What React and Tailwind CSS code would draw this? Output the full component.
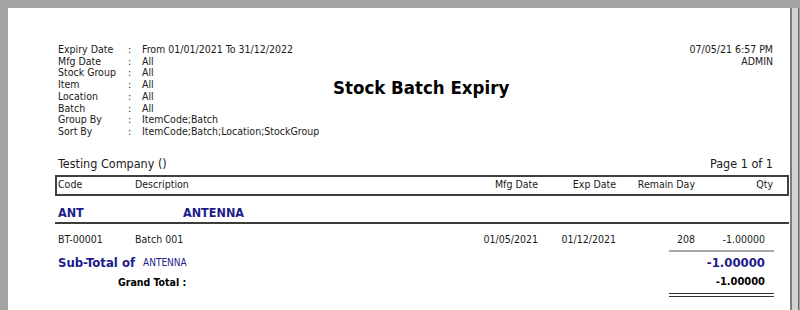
import React from 'react';

const filters = [
  ['Expiry Date', 'From 01/01/2021 To 31/12/2022'],
  ['Mfg Date', 'All'],
  ['Stock Group', 'All'],
  ['Item', 'All'],
  ['Location', 'All'],
  ['Batch', 'All'],
  ['Group By', 'ItemCode;Batch'],
  ['Sort By', 'ItemCode;Batch;Location;StockGroup'],
];

const cols = 'grid grid-cols-[77px_325px_78px_78px_79px_78px]';

export default function App() {
  return (
    <div className="w-[800px] h-[310px] overflow-hidden bg-[#a3a3a3] pt-[8px] pl-[8px] font-['DejaVu_Sans_Condensed','DejaVu_Sans',sans-serif] text-[#1a1a1a]">
      <div className="flex h-full">
        <div className="w-[782px] h-full bg-white pt-[36px] pl-[47px] pr-[1px]">
          {/* report header */}
          <div className="flex pl-[3px] pr-[16px] text-[10.5px] leading-[11.7px]">
            <div className="w-[275px]">
              {filters.map(([label, value]) => (
                <div key={label} className="grid grid-cols-[70px_14px_auto]">
                  <span>{label}</span>
                  <span>:</span>
                  <span>{value}</span>
                </div>
              ))}
            </div>
            <div className="pt-[33px] text-[18.5px] leading-[22px] font-bold text-black">
              Stock Batch Expiry
            </div>
            <div className="ml-auto text-right">
              <div>07/05/21 6:57 PM</div>
              <div>ADMIN</div>
            </div>
          </div>

          <div className="mt-[18px] flex justify-between pl-[3px] pr-[16px] text-[12.5px] leading-[15px]">
            <span>Testing Company ()</span>
            <span>Page 1 of 1</span>
          </div>

          {/* column header */}
          <div className="mt-[4px] h-[21px] border-2 border-[#404040] pl-[1px] pr-[14px] text-[10.5px] flex items-center">
            <div className={cols + ' w-full'}>
              <span>Code</span>
              <span>Description</span>
              <span className="text-right">Mfg Date</span>
              <span className="text-right">Exp Date</span>
              <span className="text-right">Remain Day</span>
              <span className="text-right">Qty</span>
            </div>
          </div>

          {/* group: item */}
          <div className="h-[28px] flex items-end pb-[2px] pl-[3px] border-b-2 border-[#3c3c3c] text-[12.5px] leading-[14px] font-bold text-[#1c1c8c]">
            <span className="w-[125px]">ANT</span>
            <span>ANTENNA</span>
          </div>

          <div className="pl-[3px] pr-[16px] text-[10.5px]">
            <div className={cols + ' mt-[8px] leading-[14px]'}>
              <span>BT-00001</span>
              <span>Batch 001</span>
              <span className="text-right">01/05/2021</span>
              <span className="text-right">01/12/2021</span>
              <span className="text-right">208</span>
              <span className="text-right pr-[8px]">-1.00000</span>
            </div>

            <div className="mt-[4px] ml-auto mr-[-1px] w-[105px] h-[2px] bg-[#a8a8a8]" />

            <div className="mt-[3px] flex items-center leading-[16px] text-[#1c1c8c]">
              <span className="text-[13px] font-bold">Sub-Total of</span>
              <span className="ml-[8px] text-[10px]">ANTENNA</span>
              <span className="ml-auto pr-[8px] text-[13px] font-bold">-1.00000</span>
            </div>

            <div className="mt-[3px] flex items-center leading-[16px] font-bold text-black">
              <span className="pl-[60px] text-[10.5px]">Grand Total :</span>
              <span className="ml-auto pr-[8px] text-[11px]">-1.00000</span>
            </div>

            <div className="mt-[3px] ml-auto mr-[-1px] w-[105px] h-[4px] border-y border-[#333]" />
          </div>
        </div>
        <div className="w-[2px] h-full bg-[#7c7c7c]" />
        <div className="w-[6px] h-full bg-[#d4d4d4]" />
        <div className="w-[1px] h-full bg-[#6a6a6a]" />
      </div>
    </div>
  );
}
